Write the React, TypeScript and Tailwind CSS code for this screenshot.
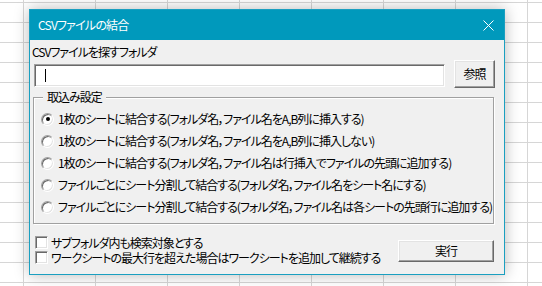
import { useState } from 'react';

const options = [
  '1枚のシートに結合する(フォルダ名，ファイル名をA,B列に挿入する)',
  '1枚のシートに結合する(フォルダ名，ファイル名をA,B列に挿入しない)',
  '1枚のシートに結合する(フォルダ名，ファイル名は行挿入でファイルの先頭に追加する)',
  'ファイルごとにシート分割して結合する(フォルダ名，ファイル名をシート名にする)',
  'ファイルごとにシート分割して結合する(フォルダ名，ファイル名は各シートの先頭行に追加する)',
];

function ClassicButton({ label, className }: { label: string; className: string }) {
  return (
    <button
      className={
        'flex items-center justify-center bg-[#f0f0f0] border border-t-white border-l-white border-r-[#696969] border-b-[#696969] shadow-[inset_-1px_-1px_0_#a0a0a0,inset_1px_1px_0_#e3e3e3] text-[12px] text-black ' +
        className
      }
    >
      {label}
    </button>
  );
}

function CheckBox({ label }: { label: string }) {
  return (
    <label className="flex h-[15px] items-center whitespace-nowrap">
      <span className="h-[13px] w-[13px] shrink-0 bg-white border border-t-[#a0a0a0] border-l-[#a0a0a0] border-r-white border-b-white shadow-[inset_1px_1px_0_#696969,inset_-1px_-1px_0_#e3e3e3]" />
      <span className="ml-[3px] leading-[15px]">{label}</span>
    </label>
  );
}

export default function App() {
  const [selected, setSelected] = useState(0);

  return (
    <div className="h-[286px] w-[542px] overflow-hidden bg-white pl-[29px] pt-[9px] [background-image:linear-gradient(to_right,#d6d6d6_1px,transparent_1px),linear-gradient(to_bottom,#d6d6d6_1px,transparent_1px)] [background-size:72px_20px] [background-position:23px_2px]">
      <div className="flex h-[266px] w-[476px] flex-col border border-[#1a9fc0] shadow-[0_0_14px_rgba(0,0,0,0.28)] font-['Noto_Sans_CJK_JP',sans-serif] [font-feature-settings:'palt'] text-[12px] tracking-[-1px] text-black">
        {/* title bar */}
        <div className="flex h-[30px] items-center justify-between bg-[#0099bc] pl-[8px] pr-[10px] text-white">
          <span className="leading-[16px] tracking-[-0.8px]">CSVファイルの結合</span>
          <svg width="11" height="11" viewBox="0 0 11 11">
            <path d="M0.5 0.5 L10.5 10.5 M10.5 0.5 L0.5 10.5" stroke="#fff" strokeWidth="1" fill="none" />
          </svg>
        </div>

        {/* body */}
        <div className="flex flex-1 flex-col bg-[#f0f0f0] pl-[2px] pt-[4px]">
          <div className="h-[16px] whitespace-nowrap leading-[16px]">CSVファイルを探すフォルダ</div>

          <div className="flex items-start">
            <div className="ml-[2px] mt-[4px] flex h-[23px] w-[411px] items-center bg-white border border-t-[#a0a0a0] border-l-[#a0a0a0] border-r-white border-b-white shadow-[inset_1px_1px_0_#696969,inset_-1px_-1px_0_#e3e3e3]">
              <span className="ml-[10px] h-[13px] w-px bg-black" />
            </div>
            <ClassicButton label="参照" className="ml-[9px] h-[28px] w-[41px]" />
          </div>

          <fieldset className="ml-[1px] mt-[2px] w-[461px] border border-[#a0a0a0] px-0 pb-[5px] shadow-[1px_1px_0_#fff,inset_1px_1px_0_#fff]">
            <legend className="ml-[9px] bg-[#f0f0f0] px-[4px] leading-[14px]">取込み設定</legend>
            <div className="flex flex-col pt-[4px]">
              {options.map((text, i) => (
                <label
                  key={i}
                  className="flex h-[22px] items-center whitespace-nowrap pl-[7px]"
                  onClick={() => setSelected(i)}
                >
                  <span className="flex h-[13px] w-[13px] shrink-0 items-center justify-center rounded-full bg-white border border-t-[#a0a0a0] border-l-[#a0a0a0] border-r-white border-b-white shadow-[inset_1px_1px_0_#696969,inset_-1px_-1px_0_#e3e3e3]">
                    {selected === i && <span className="h-[4px] w-[4px] rounded-full bg-black" />}
                  </span>
                  <span className="ml-[4px] leading-[16px]">{text}</span>
                </label>
              ))}
            </div>
          </fieldset>

          <div className="mt-[11px] flex items-end justify-between pr-[10px]">
            <div className="ml-[3px] flex flex-col">
              <CheckBox label="サブフォルダ内も検索対象とする" />
              <CheckBox label="ワークシートの最大行を超えた場合はワークシートを追加して継続する" />
            </div>
            <ClassicButton label="実行" className="mb-[3px] h-[22px] w-[96px]" />
          </div>
        </div>
      </div>
    </div>
  );
}
